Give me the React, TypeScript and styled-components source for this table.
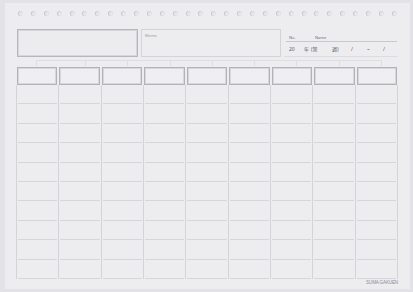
import React from "react";
import styled, { createGlobalStyle } from "styled-components";

const GlobalStyle = createGlobalStyle`
  html, body {
    margin: 0;
    padding: 0;
    background: #e3e3e7;
    font-family: "Noto Sans", "Noto Sans CJK JP", sans-serif;
  }
`;

const Sheet = styled.div`
  box-sizing: border-box;
  width: 405px;
  height: 286px;
  margin: 3px 0 0 5px;
  padding: 0 13px 0 12px;
  background: #ededf0;
  display: flex;
  flex-direction: column;
`;

const Holes = styled.div`
  display: flex;
  justify-content: space-between;
  padding: 8px 0 0 1px;
  height: 18px;
  box-sizing: border-box;
`;

const Hole = styled.span`
  width: 5px;
  height: 5px;
  border-radius: 50%;
  background: #e7e7eb;
  box-shadow: inset 1px 0 0 #c6c6cb, inset 0 1px 0 #dadade;
`;

const TopSection = styled.div`
  display: flex;
  gap: 3px;
  height: 28px;
  margin-top: 8px;
`;

const NameBox = styled.div`
  box-sizing: border-box;
  width: 121px;
  border: 1px solid #b7b7bb;
  box-shadow: inset 0 0 0 1px #d7d7db;
  background: #ececef;
`;

const MemoBox = styled.div`
  box-sizing: border-box;
  width: 140px;
  border: 1px solid #d4d4d8;
  padding: 3px 3px;
  font-size: 4px;
  line-height: 5px;
  color: #9a9aa0;
`;

const InfoArea = styled.div`
  flex: 1;
  display: flex;
  flex-direction: column;
  padding-left: 2px;
  border-bottom: 1px solid #dcdce0;
`;

const InfoLine = styled.div<{ $top: number; $ruled?: boolean }>`
  display: flex;
  align-items: flex-end;
  margin-top: ${(p) => p.$top}px;
  padding: 0 0 1px 3px;
  border-bottom: ${(p) => (p.$ruled ? "1px solid #c9c9cd" : "none")};
  color: #6a6a70;
  white-space: pre;
`;

const Tiny = styled.span<{ $w?: number }>`
  font-size: 4px;
  line-height: 5px;
  width: ${(p) => (p.$w ? `${p.$w}px` : "auto")};
`;

const Small = styled.span<{ $w?: number }>`
  font-size: 5px;
  line-height: 7px;
  color: #5a5a60;
  flex-shrink: 0;
  width: ${(p) => (p.$w ? `${p.$w}px` : "auto")};
`;

const Strip = styled.div`
  display: grid;
  grid-template-columns: 49px repeat(7, 1fr);
  width: 345px;
  height: 5px;
  margin: 3px 0 1px 19px;
  border-top: 1px solid #dedee2;
  border-right: 1px solid #dedee2;
`;

const Tick = styled.span`
  border-left: 1px solid #dedee2;
`;

const HeaderRow = styled.div`
  display: grid;
  grid-template-columns: repeat(9, 1fr);
  gap: 2px;
  width: 380px;
  height: 18px;
`;

const HeadCell = styled.div`
  box-sizing: border-box;
  border: 1px solid #b3b3b7;
  box-shadow: inset 0 0 0 1px #d8d8dc;
  background: #efeff2;
`;

const Body = styled.div`
  display: grid;
  grid-template-columns: repeat(9, 1fr);
  border-left: 1px solid #d4d4d8;
  box-sizing: border-box;
  margin-left: -1px;
  width: 382px;
`;

const Column = styled.div`
  border-right: 1.5px solid #d4d4d8;
  display: flex;
  flex-direction: column;
`;

const Cell = styled.div`
  height: 19.4px;
  box-sizing: border-box;
  margin: 0 1px;
  border-bottom: 1.5px solid #d6d6da;
`;

const Footer = styled.div`
  display: flex;
  justify-content: flex-end;
  padding-top: 1px;
  width: 381px;
  font-family: "Liberation Sans", sans-serif;
  font-size: 4.5px;
  line-height: 5px;
  color: #8a8a90;
  letter-spacing: -0.1px;
`;

const columns = Array.from({ length: 9 });
const rows = Array.from({ length: 10 });

export default function App() {
  return (
    <>
      <GlobalStyle />
      <Sheet>
        <Holes>
          {Array.from({ length: 30 }).map((_, i) => (
            <Hole key={i} />
          ))}
        </Holes>
        <TopSection>
          <NameBox />
          <MemoBox>Memo</MemoBox>
          <InfoArea>
            <InfoLine $top={6} $ruled>
              <Tiny $w={26}>No.</Tiny>
              <Tiny>Name</Tiny>
            </InfoLine>
            <InfoLine $top={4}>
              <Small $w={15}>20</Small>
              <Small $w={7}>年</Small>
              <Small $w={21}>(第</Small>
              <Small $w={19}>週)</Small>
              <Small $w={16}>/</Small>
              <Small $w={16}>~</Small>
              <Small>/</Small>
            </InfoLine>
          </InfoArea>
        </TopSection>
        <Strip>
          {Array.from({ length: 8 }).map((_, i) => (
            <Tick key={i} />
          ))}
        </Strip>
        <HeaderRow>
          {columns.map((_, i) => (
            <HeadCell key={i} />
          ))}
        </HeaderRow>
        <Body>
          {columns.map((_, c) => (
            <Column key={c}>
              {rows.map((_, r) => (
                <Cell key={r} />
              ))}
            </Column>
          ))}
        </Body>
        <Footer>SUMA GAKUEN</Footer>
      </Sheet>
    </>
  );
}
